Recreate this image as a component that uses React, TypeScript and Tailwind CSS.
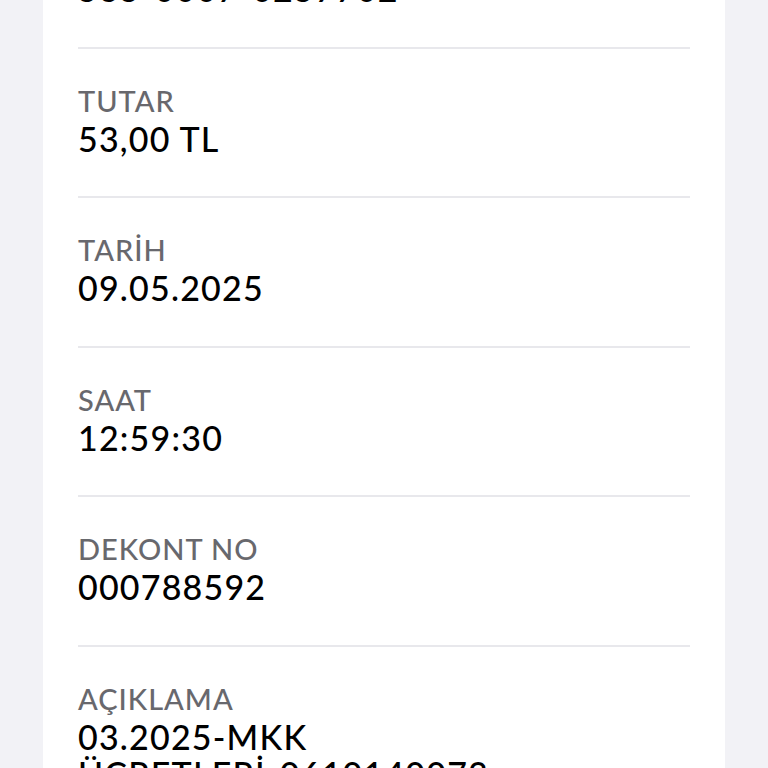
const rows = [
  { label: "IBAN", value: "535-0007-0257702" },
  { label: "TUTAR", value: "53,00 TL" },
  { label: "TARİH", value: "09.05.2025" },
  { label: "SAAT", value: "12:59:30" },
  { label: "DEKONT NO", value: "000788592" },
  { label: "AÇIKLAMA", value: "03.2025-MKK ÜCRETLERİ-0610140073" },
];

const Row = ({ label, value, last }: { label: string; value: string; last?: boolean }) => (
  <div className={last ? "pt-[34px] pb-10" : "pt-[34px] pb-[39.5px] border-b-2 border-[#e8e8ec]"}>
    <div className="text-[29px] leading-[35px] font-medium text-[#68686d] tracking-[1px]">{label}</div>
    <div className="mt-[2px] text-[34px] leading-[37px] font-medium text-black tracking-[1.2px] max-w-[420px]">
      {value}
    </div>
  </div>
);

export default function App() {
  return (
    <div
      className="w-[768px] h-[768px] overflow-hidden bg-[#f2f2f6]"
      style={{ fontFamily: "Lato, 'Liberation Sans', sans-serif" }}
    >
      <div className="mx-[43px] bg-white px-[35px] -mt-[101px]">
        <div className="w-[612px]">
          {rows.map((r, i) => (
            <Row key={r.label} label={r.label} value={r.value} last={i === rows.length - 1} />
          ))}
        </div>
      </div>
    </div>
  );
}
